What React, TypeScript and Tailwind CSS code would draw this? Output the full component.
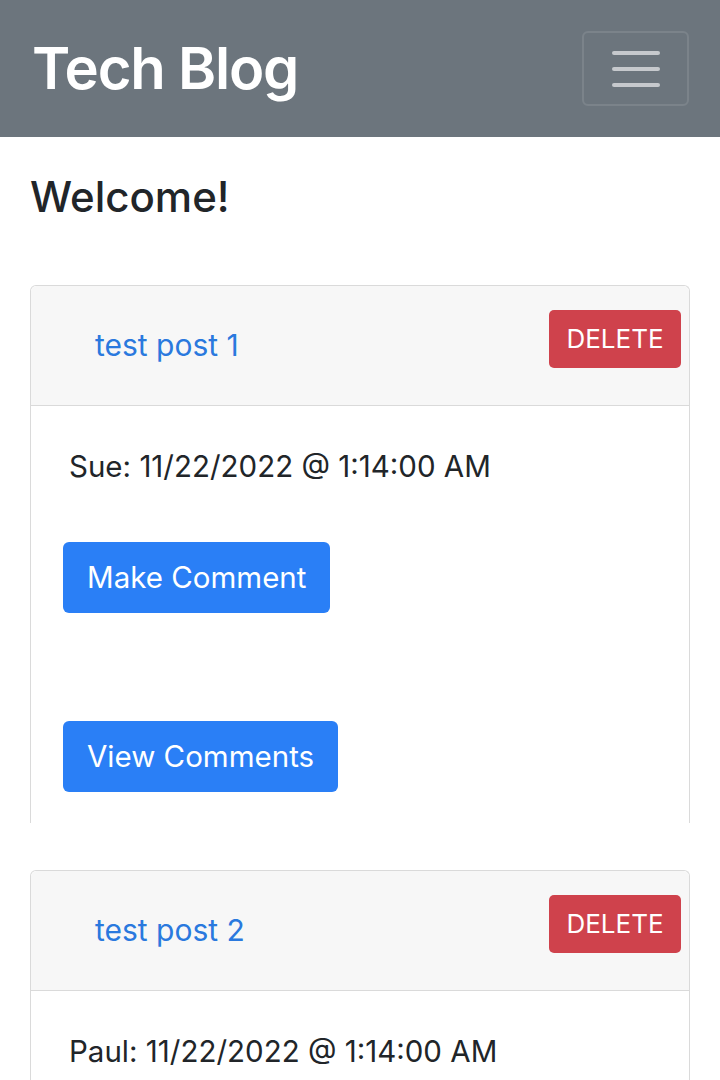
const posts = [
  { title: "test post 1", author: "Sue", date: "11/22/2022 @ 1:14:00 AM", full: true },
  { title: "test post 2", author: "Paul", date: "11/22/2022 @ 1:14:00 AM", full: false },
];

function PostCard({ title, author, date, full }: { title: string; author: string; date: string; full: boolean }) {
  return (
    <div className="rounded-t-[6px] border border-b-0 border-[#dadada] bg-white">
      <div className="flex h-[120px] items-center justify-between rounded-t-[6px] border-b border-[#dadada] bg-[#f7f7f7] pl-[64px] pr-[8px]">
        <a href="#" className="text-[30px] text-[#2a79de]">{title}</a>
        <button className="-mt-[14px] h-[58px] w-[132px] rounded-[5px] bg-[#cf424c] text-[26px] text-white">DELETE</button>
      </div>
      <div className="px-[32px] pt-[44px] pb-[31px]">
        <p className="ml-[6px] text-[29.5px] leading-[32px] text-[#212529]">
          {author}: {date}
        </p>
        {full && (
          <>
            <button className="mt-[60px] block h-[71px] rounded-[6px] bg-[#2a7ff6] px-[24px] text-[29.5px] text-white">
              Make Comment
            </button>
            <button className="mt-[108px] block h-[71px] rounded-[6px] bg-[#2a7ff6] px-[24px] text-[29.5px] text-white">
              View Comments
            </button>
          </>
        )}
      </div>
    </div>
  );
}

export default function App() {
  return (
    <div className="min-h-[1080px] bg-white font-['Inter',sans-serif]">
      <header className="flex h-[137px] items-center justify-between bg-[#6c757d] pl-[32px] pr-[31px]">
        <h1 className="text-[58px] font-semibold tracking-[-1.2px] text-white">Tech Blog</h1>
        <button className="flex h-[75px] w-[107px] flex-col items-center justify-center gap-[12px] rounded-[6px] border-2 border-white/10">
          <span className="block h-[4px] w-[48px] rounded-full bg-[#c6c9cd]" />
          <span className="block h-[4px] w-[48px] rounded-full bg-[#c6c9cd]" />
          <span className="block h-[4px] w-[48px] rounded-full bg-[#c6c9cd]" />
        </button>
      </header>
      <main className="px-[30px]">
        <h2 className="pt-[30px] text-[42px] font-medium leading-[60px] text-[#212529]">Welcome!</h2>
        <div className="mt-[58px] flex flex-col gap-[47px]">
          {posts.map((post, i) => (
            <PostCard key={i} {...post} />
          ))}
        </div>
      </main>
    </div>
  );
}
